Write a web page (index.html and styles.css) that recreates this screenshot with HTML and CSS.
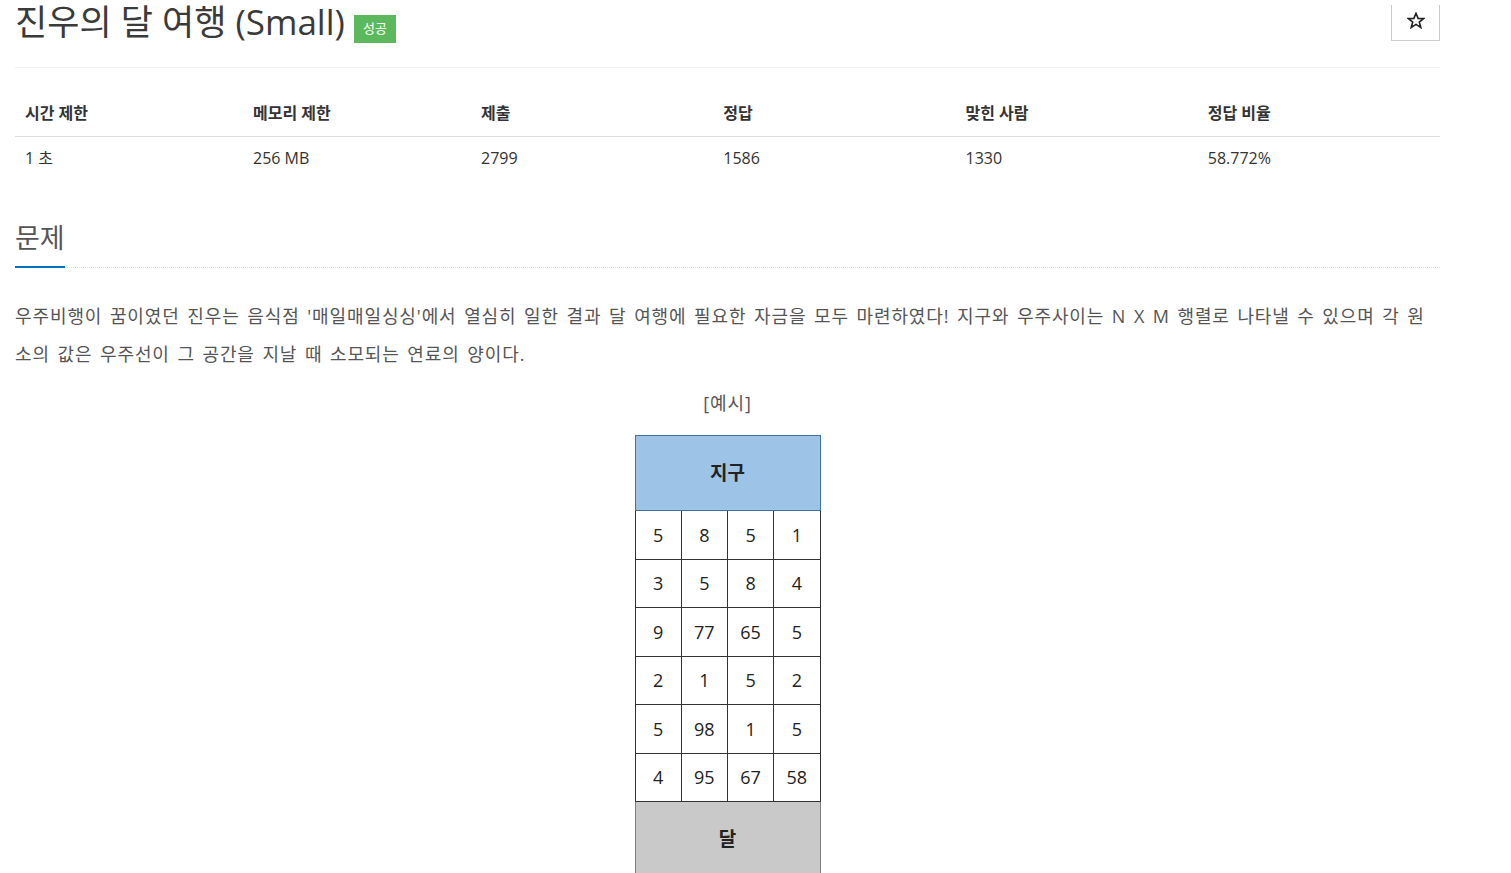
FILE: index.html
```html
<!DOCTYPE html>
<html lang="ko">
<head>
    <meta charset="UTF-8">
    <meta name="viewport" content="width=device-width, initial-scale=1.0">
    <title>진우의 달 여행 (Small)</title>
    <link rel="stylesheet" href="styles.css">
</head>
<body>
    <div class="container">
        <div class="page-header">
            <h1>
                <span class="problem-title">진우의 달 여행 (Small)</span>
                <span class="label label-success">성공</span>
            </h1>
            <button class="star-btn" title="즐겨찾기">
                <svg width="18" height="17" viewBox="0 0 18 17">
                    <polygon points="9,1.2 11.1,6.4 16.6,6.6 12.3,10 13.8,15.5 9,12.4 4.2,15.5 5.7,10 1.4,6.6 6.9,6.4" fill="none" stroke="#222" stroke-width="1.6" stroke-linejoin="miter"/>
                </svg>
            </button>
        </div>

        <table class="problem-info">
            <thead>
                <tr>
                    <th style="width: 16%">시간 제한</th>
                    <th style="width: 16%">메모리 제한</th>
                    <th style="width: 17%">제출</th>
                    <th style="width: 17%">정답</th>
                    <th style="width: 17%">맞힌 사람</th>
                    <th style="width: 17%">정답 비율</th>
                </tr>
            </thead>
            <tbody>
                <tr>
                    <td>1 초</td>
                    <td>256 MB</td>
                    <td>2799</td>
                    <td>1586</td>
                    <td>1330</td>
                    <td>58.772%</td>
                </tr>
            </tbody>
        </table>

        <section class="problem-section">
            <div class="headline">
                <h2>문제</h2>
            </div>
            <div class="problem-text">
                <p>우주비행이 꿈이였던 진우는 음식점 '매일매일싱싱'에서 열심히 일한 결과 달 여행에 필요한 자금을 모두 마련하였다! 지구와 우주사이는 N X M 행렬로 나타낼 수 있으며 각 원소의 값은 우주선이 그 공간을 지날 때 소모되는 연료의 양이다.</p>
                <p class="caption">[예시]</p>
                <table class="space-map">
                    <tr><th class="earth" colspan="4">지구</th></tr>
                    <tr><td>5</td><td>8</td><td>5</td><td>1</td></tr>
                    <tr><td>3</td><td>5</td><td>8</td><td>4</td></tr>
                    <tr><td>9</td><td>77</td><td>65</td><td>5</td></tr>
                    <tr><td>2</td><td>1</td><td>5</td><td>2</td></tr>
                    <tr><td>5</td><td>98</td><td>1</td><td>5</td></tr>
                    <tr><td>4</td><td>95</td><td>67</td><td>58</td></tr>
                    <tr><th class="moon" colspan="4">달</th></tr>
                </table>
            </div>
        </section>
    </div>
</body>
</html>
```

FILE: styles.css
```css
html {
    overflow: hidden;
}

body {
    margin: 0;
    padding: 0 15px;
    font-family: "Open Sans", "Noto Sans CJK KR", sans-serif;
    font-size: 16px;
    color: #333;
    background: #fff;
}

.container {
    width: 1425px;
}

.page-header {
    display: flex;
    justify-content: space-between;
    align-items: flex-start;
    padding-top: 2px;
    padding-bottom: 24px;
    border-bottom: 1px solid #eee;
}

.page-header h1 {
    margin: 0;
    font-size: 35px;
    font-weight: 400;
    line-height: 40px;
    color: #3a3a3a;
}

.label {
    display: inline-block;
    padding: 4px 9px 6px;
    font-size: 13px;
    line-height: 18px;
    color: #fff;
    vertical-align: 2px;
}

.label-success {
    background: #5cb85c;
}

.star-btn {
    display: flex;
    align-items: flex-start;
    justify-content: center;
    margin-top: 3px;
    width: 49px;
    height: 36px;
    padding: 7px 0 0;
    background: #fff;
    border: 1px solid #ccc;
    border-top: none;
}

.problem-info {
    width: 100%;
    margin-top: 23px;
    border-collapse: collapse;
    text-align: left;
}

.problem-info th,
.problem-info td {
    padding: 8px 10px;
    line-height: 29px;
}

.problem-info td {
    padding: 7px 10px 9px;
}

.problem-info th {
    font-weight: 700;
    border-bottom: 1px solid #ddd;
}

.problem-section {
    margin-top: 38px;
}

.headline {
    border-bottom: 1px dotted #ddd;
}

.headline h2 {
    display: inline-block;
    margin: 0 0 -1px;
    padding-bottom: 10px;
    font-size: 27px;
    font-weight: 400;
    line-height: 36px;
    color: #555;
    border-bottom: 2px solid #0076c0;
}

.problem-text {
    margin-top: 29px;
    font-size: 18px;
    line-height: 38px;
    color: #555;
}

.problem-text p {
    margin: 0 0 11px;
    letter-spacing: 0.9px;
    word-spacing: 2px;
}

.caption {
    text-align: center;
}

.space-map {
    margin: 13px auto 0;
    width: 186px;
    border-collapse: collapse;
    table-layout: fixed;
    color: #222;
    line-height: 22px;
}

.space-map td {
    height: 47.5px;
    padding: 0;
    text-align: center;
    border: 1px solid #333;
    font-size: 18px;
}

.space-map th {
    height: 74px;
    padding: 0;
    font-size: 19px;
    font-weight: 700;
}

.space-map .earth {
    background: #9dc3e6;
    border: 1px solid #41719c;
}

.space-map .moon {
    background: #c9c9c9;
    border: 1px solid #808080;
}
```
